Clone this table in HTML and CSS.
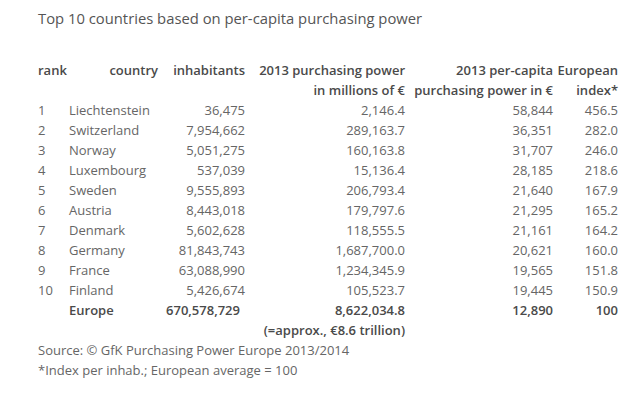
FILE: index.html
```html
<!DOCTYPE html>
<html>
<head>
<meta charset="utf-8">
<link rel="stylesheet" href="styles.css">
</head>
<body>
<div class="page">
  <h1 class="title">Top 10 countries based on per-capita purchasing power</h1>
  <table class="data">
    <colgroup>
      <col class="c-rank"><col class="c-country"><col class="c-inh"><col class="c-pp"><col class="c-pc"><col class="c-idx">
    </colgroup>
    <thead>
      <tr><th class="l">rank</th><th>country</th><th>inhabitants</th><th>2013 purchasing power</th><th>2013 per-capita</th><th>European</th></tr>
      <tr><th></th><th></th><th></th><th>in millions of €</th><th>purchasing power in €</th><th>index*</th></tr>
    </thead>
    <tbody>
      <tr><td class="l">1</td><td class="l">Liechtenstein</td><td>36,475</td><td>2,146.4</td><td>58,844</td><td>456.5</td></tr>
      <tr><td class="l">2</td><td class="l">Switzerland</td><td>7,954,662</td><td>289,163.7</td><td>36,351</td><td>282.0</td></tr>
      <tr><td class="l">3</td><td class="l">Norway</td><td>5,051,275</td><td>160,163.8</td><td>31,707</td><td>246.0</td></tr>
      <tr><td class="l">4</td><td class="l">Luxembourg</td><td>537,039</td><td>15,136.4</td><td>28,185</td><td>218.6</td></tr>
      <tr><td class="l">5</td><td class="l">Sweden</td><td>9,555,893</td><td>206,793.4</td><td>21,640</td><td>167.9</td></tr>
      <tr><td class="l">6</td><td class="l">Austria</td><td>8,443,018</td><td>179,797.6</td><td>21,295</td><td>165.2</td></tr>
      <tr><td class="l">7</td><td class="l">Denmark</td><td>5,602,628</td><td>118,555.5</td><td>21,161</td><td>164.2</td></tr>
      <tr><td class="l">8</td><td class="l">Germany</td><td>81,843,743</td><td>1,687,700.0</td><td>20,621</td><td>160.0</td></tr>
      <tr><td class="l">9</td><td class="l">France</td><td>63,088,990</td><td>1,234,345.9</td><td>19,565</td><td>151.8</td></tr>
      <tr><td class="l">10</td><td class="l">Finland</td><td>5,426,674</td><td>105,523.7</td><td>19,445</td><td>150.9</td></tr>
      <tr class="total"><td></td><td class="l">Europe</td><td class="inh-total">670,578,729</td><td>8,622,034.8</td><td>12,890</td><td>100</td></tr>
      <tr class="total"><td></td><td></td><td></td><td>(=approx., €8.6 trillion)</td><td></td><td></td></tr>
    </tbody>
  </table>
  <p class="note">Source: © GfK Purchasing Power Europe 2013/2014</p>
  <p class="note">*Index per inhab.; European average = 100</p>
</div>
</body>
</html>
```
FILE: styles.css
```css
html, body {
  margin: 0;
  padding: 0;
  background: #ffffff;
}
body {
  font-family: "Open Sans", "DejaVu Sans", sans-serif;
  color: #666666;
}
.page {
  padding: 8px 0 0 38px;
}
.title {
  margin: 0;
  font-size: 14.8px;
  font-weight: normal;
  line-height: 20px;
  color: #555555;
}
.data {
  margin-top: 32px;
  border-collapse: collapse;
  table-layout: fixed;
  width: 580px;
  font-size: 13px;
}
.c-rank { width: 31px; }
.c-country { width: 89px; }
.c-inh { width: 87px; }
.c-pp { width: 160px; }
.c-pc { width: 148px; }
.c-idx { width: 65px; }
.data th, .data td {
  padding: 0;
  height: 20px;
  line-height: 20px;
  text-align: right;
  white-space: nowrap;
  vertical-align: middle;
}
.data th {
  font-weight: 600;
  color: #4a4a4a;
}
.data .l {
  text-align: left;
}
.total td {
  font-weight: 600;
  color: #4a4a4a;
}
.inh-total {
  padding-right: 5px !important;
}
.note {
  margin: 0;
  font-size: 13px;
  line-height: 20px;
  color: #666666;
}
```
